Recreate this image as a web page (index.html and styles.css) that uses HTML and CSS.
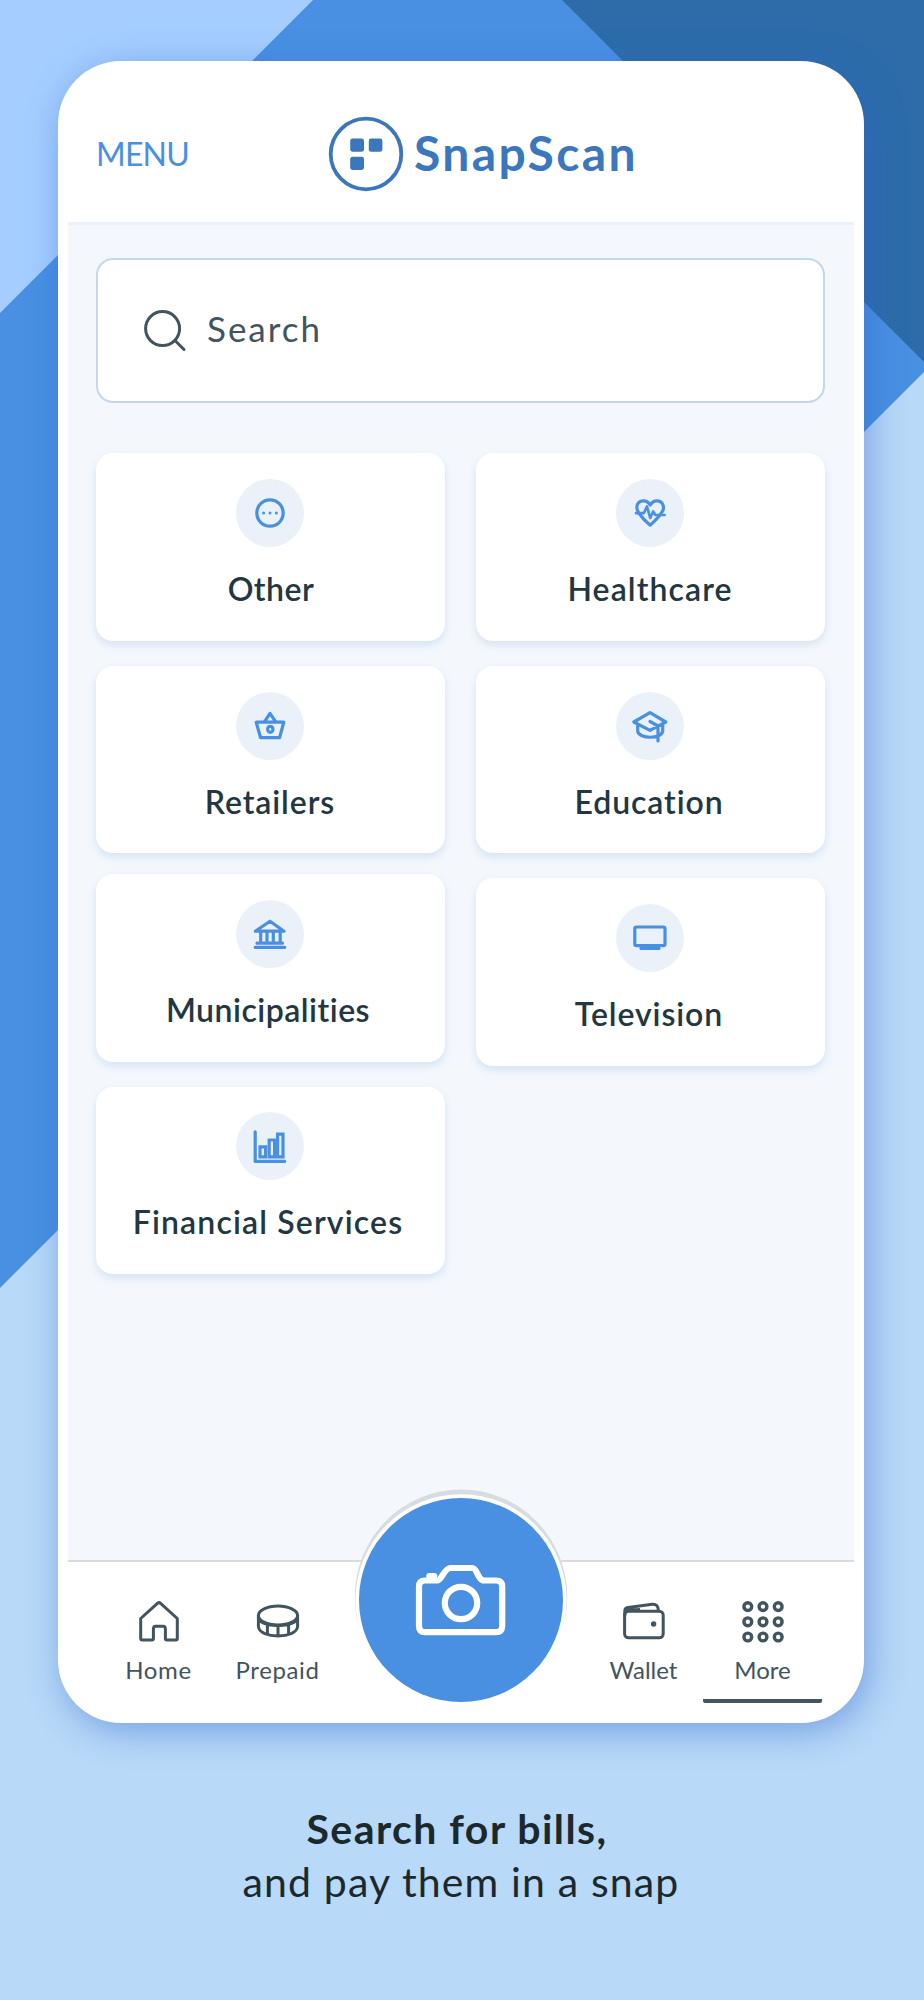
FILE: index.html
```html
<!DOCTYPE html>
<html lang="en">
<head>
<meta charset="utf-8">
<title>SnapScan</title>
<link rel="stylesheet" href="styles.css">
</head>
<body>
<div class="page">
  <svg class="backdrop" viewBox="0 0 924 2000" aria-hidden="true">
    <rect width="924" height="2000" fill="#b8d9f8"/>
    <path d="M0 0H924V372L0 1296Z" fill="#4990e2"/>
    <path d="M0 1150H70V1218L0 1288Z" fill="#4990e2"/>
    <path d="M0 1288L70 1218V1300H0Z" fill="#b8d9f8"/>
    <path d="M0 0H313L0 313Z" fill="#a5ceff"/>
    <path d="M562 0H924V362Z" fill="#2d6ca9"/>
  </svg>

  <main class="phone">
    <header class="header">
      <a class="menu">MENU</a>
      <div class="brand">
        <svg class="brand-mark" viewBox="0 0 76 76">
          <circle cx="38" cy="38" r="35.3" fill="none" stroke="#3a77bd" stroke-width="3.8"/>
          <g fill="#3a77bd">
            <rect x="22.2" y="22.6" width="13.8" height="13.2" rx="2.4"/>
            <rect x="40.8" y="22.6" width="13.6" height="13.2" rx="2.4"/>
            <rect x="22.2" y="40.8" width="13.8" height="13.2" rx="2.4"/>
          </g>
        </svg>
        <span class="brand-name">SnapScan</span>
      </div>
    </header>

    <section class="content">
      <div class="search">
        <svg class="search-icon" viewBox="0 0 44 44" fill="none" stroke="#42545d" stroke-width="3" stroke-linecap="round">
          <circle cx="19.6" cy="19.6" r="17"/>
          <path d="M32 31.5L41 40.5"/>
        </svg>
        <span class="search-text">Search</span>
      </div>

      <div class="grid">
        <div class="column">
          <article class="card">
            <span class="badge"><svg viewBox="0 0 68 68" class="glyph">
              <circle cx="34" cy="34" r="13.2"/>
              <g fill="#4990e2" stroke="none"><circle cx="27.6" cy="34" r="1.5"/><circle cx="34" cy="34" r="1.5"/><circle cx="40.4" cy="34" r="1.5"/></g>
            </svg></span>
            <span class="label other">Other</span>
          </article>
          <article class="card">
            <span class="badge"><svg viewBox="0 0 68 68" class="glyph">
              <path d="M20.2 30.2H47.8L43.6 45.7H24.6Z M28.6 29.6L34 21.4L39.6 29.6"/>
              <ellipse cx="34.3" cy="37.3" rx="2.7" ry="3"/>
            </svg></span>
            <span class="label retailers">Retailers</span>
          </article>
          <article class="card">
            <span class="badge"><svg viewBox="0 0 68 68" class="glyph">
              <path d="M19.3 31.2L34 21.2L48 31.2Z M24.7 32V43 M31 32V43 M37.3 32V43 M44.2 32V43 M21 43.2H46.5 M19.2 47.3H48.8"/>
            </svg></span>
            <span class="label municipalities">Municipalities</span>
          </article>
          <article class="card short">
            <span class="badge"><svg viewBox="0 0 68 68" class="glyph">
              <path d="M19.2 19.8V49.4H48.7"/>
              <path stroke-linejoin="miter" d="M24 34.8H29.6V44.8H24Z M33.2 28H38.6V44.8H33.2Z M41.6 22.2H47V44.8H41.6Z"/>
            </svg></span>
            <span class="label financial">Financial Services</span>
          </article>
        </div>
        <div class="column right">
          <article class="card">
            <span class="badge"><svg viewBox="0 0 68 68" class="glyph">
              <path d="M22.8 34C19.7 29.6 20 22.3 27 21.8C30.3 21.6 32.6 23.3 34.2 26C35.8 23.3 38.1 21.6 41.4 21.8C48 22.4 48.6 29.6 45.8 33.4C42.4 38.8 38.2 42.5 34.2 46.2C29.8 42.7 26.2 39 22.8 34Z"/>
              <path stroke-width="2.7" d="M20 34.2H27.8L31 27.5L34.2 39L37.2 32.5L39.4 36H48.6"/>
            </svg></span>
            <span class="label healthcare">Healthcare</span>
          </article>
          <article class="card">
            <span class="badge"><svg viewBox="0 0 68 68" class="glyph">
              <path d="M34 20.6L17.8 30L34 38.3L49.8 30ZM21.7 33V39.4C23.5 47.2 45 47.2 46.7 39.4V33 M34 29.5L42 34V49"/>
            </svg></span>
            <span class="label education">Education</span>
          </article>
          <article class="card">
            <span class="badge"><svg viewBox="0 0 68 68" class="glyph">
              <rect x="18.8" y="23" width="30.2" height="18.6" rx="1.6"/>
              <path d="M25 44.4H43"/>
            </svg></span>
            <span class="label television">Television</span>
          </article>
        </div>
      </div>
    </section>

    <nav class="tabs">
      <a class="tab home">
        <svg class="tab-icon" viewBox="0 0 48 48"><path d="M5.7 20.5L22.4 5.3Q24 4 25.6 5.3L42.3 20.5V40.5Q42.3 42 40.8 42H31.8Q30.4 42 30.4 40.5V31Q30.4 28.2 28 28.2H20.8Q18.4 28.2 18.4 31V40.5Q18.4 42 17 42H7.2Q5.7 42 5.7 40.5Z"/></svg>
        <span>Home</span>
      </a>
      <a class="tab prepaid">
        <svg class="tab-icon" viewBox="0 0 48 48"><ellipse cx="24" cy="17.5" rx="19.6" ry="9.5"/><path d="M4.4 17.5V28.5C5.4 41 42.6 41 43.6 28.5V17.5 M4.4 19.5C6 30.5 42 30.5 43.6 19.5 M13.4 26.3V35.5 M24 27.5V37.4 M34.6 26.3V35.5"/></svg>
        <span>Prepaid</span>
      </a>
      <a class="scan">
        <svg viewBox="0 0 214 218">
          <ellipse cx="107" cy="109" rx="106.3" ry="107.5" fill="#d6dcdf"/>
          <ellipse cx="107" cy="112" rx="105.6" ry="105.8" fill="#fff"/>
          <circle cx="107" cy="112" r="102" fill="#4990e2"/>
          <g fill="none" stroke="#fff" stroke-width="6.2" stroke-linejoin="round">
            <path d="M71 92.5H83C88 92.5 90 80 96.5 80H118.5C123 80 124 92.5 130 92.5H142Q148.2 92.5 148.2 98.5V138Q148.2 144.2 142 144.2H71Q65 144.2 65 138V98.5Q65 92.5 71 92.5Z"/>
            <circle cx="107" cy="115" r="16.2"/>
            <path stroke-linecap="round" d="M75.3 88H80.2"/>
          </g>
        </svg>
      </a>
      <a class="tab wallet">
        <svg class="tab-icon" viewBox="0 0 48 48"><rect x="4.6" y="13.2" width="38.6" height="26.6" rx="4"/><path d="M4.8 18V13Q4.8 9.8 8 9.4L32.5 6.2Q38 5.8 38.4 12.5 M6 12.2L20 11.4"/><circle cx="33.6" cy="26" r="2.7" fill="#42545d" stroke="none"/></svg>
        <span>Wallet</span>
      </a>
      <a class="tab more">
        <svg class="tab-icon dots" viewBox="0 0 48 48"><circle cx="8.8" cy="8.6" r="3.9"/><circle cx="24" cy="8.6" r="3.9"/><circle cx="39.2" cy="8.6" r="3.9"/><circle cx="8.8" cy="23.8" r="3.9"/><circle cx="24" cy="23.8" r="3.9"/><circle cx="39.2" cy="23.8" r="3.9"/><circle cx="8.8" cy="39" r="3.9"/><circle cx="24" cy="39" r="3.9"/><circle cx="39.2" cy="39" r="3.9"/></svg>
        <span>More</span>
      </a>
    </nav>
  </main>

  <footer class="caption">
    <strong>Search for bills,</strong>
    <span>and pay them in a snap</span>
  </footer>
</div>
</body>
</html>
```

FILE: styles.css
```css
* { box-sizing: border-box; }
body { margin: 0; font-family: Lato, "Open Sans", sans-serif; }
svg { display: block; }

.page {
  position: relative;
  width: 924px;
  height: 2000px;
  padding: 61px 60px 0 58px;
  overflow: hidden;
}
.backdrop { position: absolute; inset: 0; width: 924px; height: 2000px; z-index: -1; }

.phone {
  width: 806px;
  height: 1662px;
  padding: 0 10px;
  background: #fff;
  border-radius: 63px;
  box-shadow: 5px 8px 36px rgba(45, 100, 205, .48);
}

.header { display: flex; align-items: center; height: 161px; padding: 24px 0 0 28px; }
.menu { width: 232px; font-size: 32px; letter-spacing: -.8px; color: #4990e2; }
.brand { display: flex; align-items: center; gap: 10px; }
.brand-mark { width: 76px; height: 76px; }
.brand-name { margin-top: -2px; font-size: 48px; font-weight: 700; letter-spacing: 2.4px; color: #3a77bd; }

.content {
  height: 1338px;
  padding: 33px 29px 0 28px;
  background: #f4f8fd;
  border-top: 3px solid #ebf1f8;
}
.search {
  display: flex;
  align-items: center;
  gap: 20px;
  height: 145px;
  padding: 0 0 0 45px;
  background: #fff;
  border: 2px solid #c5d7ea;
  border-radius: 17px;
}
.search-icon { width: 44px; height: 44px; }
.search-text { margin-top: -5px; font-size: 35px; letter-spacing: 2px; color: #42545d; }

.grid { display: grid; grid-template-columns: 349px 349px; gap: 31px; margin-top: 50px; }
.column { display: flex; flex-direction: column; gap: 25px; }
.column .card:nth-child(2) { margin-bottom: -4px; }
.column.right .card:nth-child(2) { margin-bottom: 0; }
.card {
  display: flex;
  flex-direction: column;
  align-items: center;
  height: 187.5px;
  padding: 26px 1px 0 0;
  background: #fff;
  border-radius: 17px;
  box-shadow: 0 4px 9px rgba(110, 160, 215, .24);
}
.card.short { padding-top: 25px; }
.badge { width: 68px; height: 68px; border-radius: 50%; background: #eaf1f9; }
.glyph { fill: none; stroke: #4990e2; stroke-width: 3.2; stroke-linecap: round; stroke-linejoin: round; }
.label {
  margin-top: 22px;
  font-size: 32px;
  line-height: 40px;
  font-weight: 600;
  letter-spacing: .9px;
  color: #223741;
  white-space: nowrap;
}
.other { letter-spacing: .5px; padding-left: 2px; }
.municipalities { letter-spacing: .5px; padding-right: 4px; }
.financial { letter-spacing: 1.15px; padding-right: 4px; }
.healthcare { letter-spacing: 1.1px; }
.education, .television { padding-right: 2px; }

.tabs {
  position: relative;
  display: flex;
  height: 163px;
  border-top: 2px solid #d6dcdf;
  padding: 36px 32px 0 31px;
}
.tab { display: flex; flex-direction: column; align-items: center; width: 119px; font-size: 24px; line-height: 30px; color: #42545d; }
.tab span { margin-top: 9px; }
.home span, .prepaid span { letter-spacing: .6px; }
.tab-icon { width: 48px; height: 48px; fill: none; stroke: #42545d; stroke-width: 3; stroke-linejoin: round; }
.tab-icon.dots { stroke-width: 3.4; }
.wallet { margin-left: auto; }
.more { height: 105px; border-bottom: 4px solid #42545d; border-radius: 2px; }
.scan { position: absolute; left: 286px; top: -74px; width: 214px; height: 218px; }

.caption {
  display: flex;
  flex-direction: column;
  align-items: center;
  margin-top: 79px;
  font-size: 41px;
  line-height: 53px;
  color: #1b292d;
}
.caption strong { padding-right: 8px; letter-spacing: 1.45px; }
.caption span { letter-spacing: 1.15px; }
```
